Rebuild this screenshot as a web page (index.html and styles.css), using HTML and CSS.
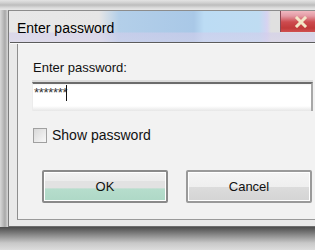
FILE: index.html
```html
<!DOCTYPE html>
<html>
<head>
<meta charset="utf-8">
<link rel="stylesheet" href="styles.css">
</head>
<body>
<div class="screen">
  <div class="topstrip"></div>
  <div class="main">
    <div class="leftstrip"></div>
    <div class="window">
      <div class="titlebar">
        <span class="title">Enter password</span>
        <div class="close">
          <svg width="14" height="12" viewBox="0 0 14 12"><path d="M3 2 L11 10 M11 2 L3 10" stroke="#f3e6c8" stroke-width="3" stroke-linecap="square"/></svg>
        </div>
      </div>
      <div class="sep"></div>
      <div class="frame">
        <div class="client">
          <div class="label">Enter password:</div>
          <div class="input"><span class="dots">*******</span><span class="caret"></span></div>
          <label class="check"><span class="box"></span><span>Show password</span></label>
          <div class="buttons">
            <button class="btn ok">OK</button>
            <button class="btn">Cancel</button>
          </div>
        </div>
      </div>
    </div>
  </div>
  <div class="shadow"></div>
</div>
</body>
</html>
```
FILE: styles.css
```css
html, body {
  margin: 0;
  padding: 0;
}
body {
  font-family: "Liberation Sans", Arial, sans-serif;
  color: #111;
  background: #e6e6e6;
}
.screen {
  width: 315px;
  height: 250px;
  overflow: hidden;
  display: flex;
  flex-direction: column;
}
.topstrip {
  height: 10px;
  flex: none;
  background: linear-gradient(#e4e4e4 0, #cfcfcf 3px, #bdbdbd 5px, #dcdcdc 8px, #e8e8e8 10px);
}
.main {
  display: flex;
  flex: none;
}
.leftstrip {
  width: 8px;
  flex: none;
  background: linear-gradient(90deg, #d8d8d8 0, #bcbcbc 3px, #a8a8a8 5px, #cacaca 7px, #d8d8d8 8px);
}
.window {
  width: 320px;
  flex: none;
  border-left: 1px solid #7c7c7c;
  border-top: 1px solid #8c8c8c;
  background: #e2e2e2;
}
.titlebar {
  height: 21px;
  padding-bottom: 10px;
  display: flex;
  align-items: flex-end;
  background:
    linear-gradient(rgba(255,255,255,0) 0, rgba(255,255,255,0) 21px, rgba(210,205,235,0.6) 22px, rgba(215,210,235,0.6) 31px),
    linear-gradient(90deg, #e8e8e8 0, #e6e6e6 90px, #b3cfe9 110px, #a9c8e7 185px, #bcdcf4 195px, #bfdcf2 250px, #d6d3f1 258px, #e0e0e0 262px);
}
.title {
  padding-left: 8px;
  font-size: 14px;
  line-height: 16px;
  position: relative;
  top: 4px;
  color: #000;
}
.close {
  margin-left: auto;
  margin-right: 5px;
  align-self: flex-start;
  width: 44px;
  height: 21px;
  display: flex;
  align-items: center;
  justify-content: center;
  padding-right: 4px;
  box-sizing: border-box;
  border-left: 1px solid #8a4a55;
  background: linear-gradient(#f0b8c0 0, #e49aa4 5px, #cd4b4f 11px, #c13a3a 17px, #d05050 21px);
}
.sep {
  height: 1px;
  margin-left: 1px;
  background: #5c5c5c;
  border-bottom: 1px solid #fafafa;
}
.frame {
  padding: 0 0 6px 8px;
  border-bottom: 1px solid #6e6e6e;
  background: #e9e9e9;
}
.client {
  border-left: 1px solid #8e8e8e;
  border-bottom: 1px solid #9a9a9a;
  background: #f2f2f2;
  padding: 16px 0 13px 15px;
  height: 146px;
}
.label {
  font-size: 13px;
  line-height: 16px;
}
.input {
  margin-top: 6px;
  margin-left: -1px;
  height: 27px;
  background: linear-gradient(#f4f4f4 0, #fff 2px, #fff 22px, #e6e6e6 27px);
  border-top: 2px solid #6c6c6c;
  box-shadow: 0 -2px 0 #dcdcdc;
  border-left: 1px solid #ececec;
  border-right: 2px solid #a8a8a8;
  width: 277px;
  display: flex;
  align-items: flex-start;
  padding-left: 1px;
  box-sizing: content-box;
}
.dots {
  font-size: 13px;
  line-height: 13px;
  margin-top: 2px;
  letter-spacing: -0.3px;
  color: #333;
}
.caret {
  width: 1px;
  height: 16px;
  margin-top: 1px;
  margin-left: -1px;
  background: #111;
}
.check {
  margin-top: 16px;
  display: flex;
  align-items: center;
  gap: 5px;
  font-size: 14px;
  line-height: 17px;
}
.box {
  width: 12px;
  height: 13px;
  border: 1px solid #a0a0a0;
  background: linear-gradient(135deg, #d8d8d8, #f8f8f8);
  box-sizing: content-box;
}
.buttons {
  margin-top: 26px;
  margin-left: 9px;
  display: flex;
  gap: 18px;
}
.btn {
  width: 126px;
  height: 33px;
  border: 2px solid #9a9a9a;
  border-radius: 2px;
  box-shadow: inset 0 0 0 1px #ffffff;
  background: linear-gradient(#f4f4f4 0, #efefef 50%, #dcdcdc 51%, #d4d4d4 100%);
  font-family: "Liberation Sans", Arial, sans-serif;
  font-size: 13px;
  color: #111;
  padding: 0;
}
.btn.ok {
  border-color: #8a8a8a;
  background: linear-gradient(#f2f2f2 0, #ececec 30%, #e2e2e2 32%, #e2e2e2 55%, #b6ddcc 58%, #aed8c6 100%);
}
.shadow {
  flex: 1;
  background: linear-gradient(#4c4c4c 0, #8a8a8a 8px, #c8c8c8 16px, #e6e6e6 26px);
}
```
